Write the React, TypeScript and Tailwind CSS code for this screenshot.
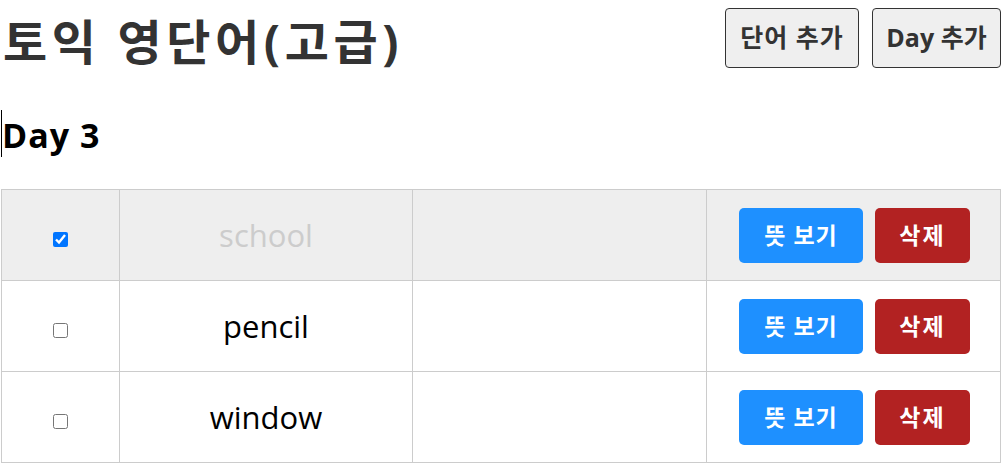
import React from 'react';

interface Word {
  id: number;
  eng: string;
  done: boolean;
}

const words: Word[] = [
  { id: 1, eng: 'school', done: true },
  { id: 2, eng: 'pencil', done: false },
  { id: 3, eng: 'window', done: false },
];

const font = { fontFamily: '"Open Sans", "Noto Sans CJK KR", sans-serif' };

const WordRow: React.FC<{ word: Word }> = ({ word }) => (
  <tr className={word.done ? 'bg-[#eeeeee] text-[#cccccc]' : 'text-black'}>
    <td className="border border-[#cccccc] w-[118px] h-[91px] text-center align-middle">
      <input type="checkbox" defaultChecked={word.done} className="w-[15px] h-[15px] align-middle mt-[5px]" />
    </td>
    <td className="border border-[#cccccc] w-[293px] text-center text-[31px]">{word.eng}</td>
    <td className="border border-[#cccccc] w-[294px]"></td>
    <td className="border border-[#cccccc] text-right pr-[30px]">
      <div className="flex justify-end gap-3">
        <button className="w-[124px] h-[55px] rounded-[5px] bg-[#1e90ff] text-white text-[23px] tracking-[1px] font-bold">
          뜻 보기
        </button>
        <button className="w-[95px] h-[55px] rounded-[5px] bg-[#b22222] text-white text-[23px] tracking-[2px] font-bold">
          삭제
        </button>
      </div>
    </td>
  </tr>
);

export default function App() {
  return (
    <div className="w-[1000px] mx-auto bg-white" style={font}>
      <div className="flex justify-between items-start pt-[8px]">
        <h1 className="text-[48px] font-bold text-[#333333] leading-[60px] tracking-[4.6px] pl-[2px] mt-[4px]">토익 영단어(고급)</h1>
        <div className="flex gap-[13px]">
          <button className="w-[134px] h-[60px] rounded-[4px] border border-[#333333] bg-[#efefef] text-[#333333] text-[25px] tracking-[1px] font-bold">
            단어 추가
          </button>
          <button className="w-[129px] h-[60px] rounded-[4px] border border-[#333333] bg-[#efefef] text-[#333333] text-[25px] font-bold">
            Day 추가
          </button>
        </div>
      </div>
      <div className="flex items-center mt-[38px] h-[47px]">
        <span className="w-px h-[47px] bg-black"></span>
        <h2 className="text-[34px] font-bold text-black leading-[47px] tracking-[1px] mt-[4px]">Day 3</h2>
      </div>
      <table className="w-full border-collapse mt-[32px]">
        <tbody>
          {words.map((w) => (
            <WordRow key={w.id} word={w} />
          ))}
        </tbody>
      </table>
    </div>
  );
}
